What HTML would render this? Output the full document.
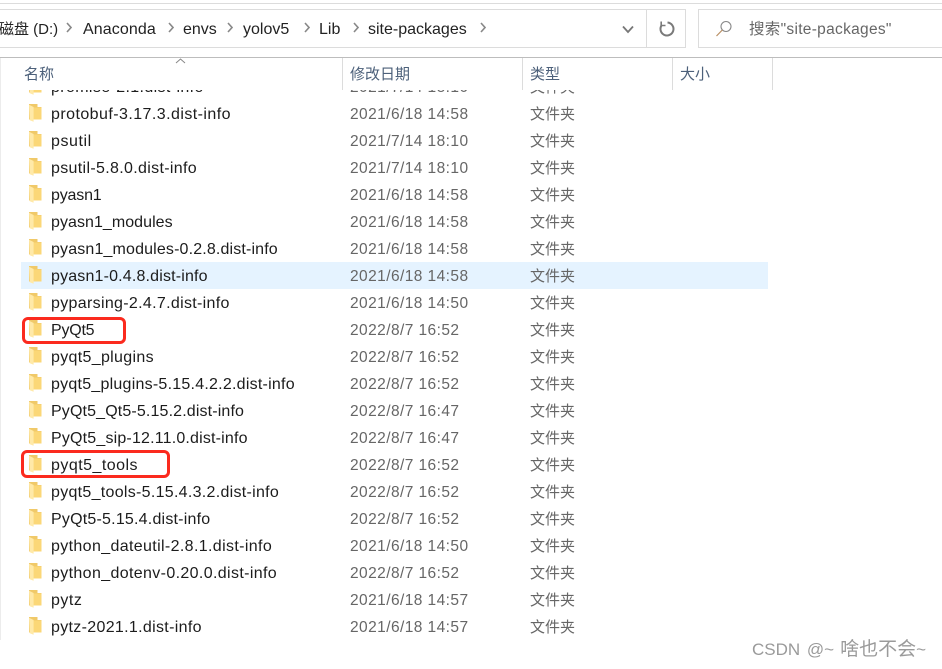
<!DOCTYPE html>
<html><head><meta charset="utf-8"><style>
html,body{margin:0;padding:0;background:#fff}
body{width:942px;height:669px;position:relative;overflow:hidden;font-family:"Liberation Sans","Noto Sans CJK SC",sans-serif;color:#1a1a1a}
.l{position:absolute;background:#dcdcdc}
.t{position:absolute;white-space:nowrap;line-height:20px;height:20px}
.b{font-size:16px;top:19px;color:#222}
.h{font-size:15px;top:65px;color:#4c607a}
.c{position:absolute;top:22px}
#list{position:absolute;left:0;top:90px;width:942px;height:550px;overflow:hidden}
.r{position:absolute;left:0;width:942px;height:27px;line-height:27px;font-size:16px;white-space:nowrap}
.r span{position:absolute;top:1px}
.r .n{left:51px;color:#1c1c1c}
.r .d{left:350px;color:#666;letter-spacing:.43px;font-size:15.5px}
.r .k{left:530px;color:#666;font-size:15px;top:1px}
.r svg{position:absolute;left:29px;top:4px}
.red{position:absolute;border:3.5px solid #fb2a1e;border-radius:6px;box-sizing:border-box}
</style></head><body>
<svg width="0" height="0" style="position:absolute"><defs>
<symbol id="f" viewBox="0 0 13 18"><path d="M0 0H8.5V3H12.5V15.5H0Z" fill="#f0c969"/><path d="M4 3.5H12.5V15.5H4Z" fill="#fbd777"/><path d="M0 .8L4.6 3V17.8L.8 16.2Z" fill="#ffe9a8"/></symbol></defs></svg>

<div class="l" style="left:0;top:3px;width:942px;height:1px"></div>
<div class="l" style="left:0;top:9px;width:685px;height:1px"></div>
<div class="l" style="left:0;top:47px;width:685px;height:1px"></div>
<div class="l" style="left:646px;top:9px;width:1px;height:39px"></div>
<div class="l" style="left:685px;top:9px;width:1px;height:39px"></div>
<div class="l" style="left:698px;top:9px;width:244px;height:1px"></div>
<div class="l" style="left:698px;top:47px;width:244px;height:1px"></div>
<div class="l" style="left:698px;top:9px;width:1px;height:39px"></div>
<div class="l" style="left:0;top:57px;width:942px;height:1px;background:#bdbdbd"></div>
<div class="l" style="left:0;top:58px;width:1px;height:582px;background:#ececec"></div>

<span class="t b" style="left:-1px;top:20px;font-size:15px">磁盘 (D:)</span>
<span class="t b" style="left:83px;top:20px;letter-spacing:.1px">Anaconda</span>
<span class="t b" style="left:183px;top:20px">envs</span>
<span class="t b" style="left:243px;top:20px">yolov5</span>
<span class="t b" style="left:319px;top:20px">Lib</span>
<span class="t b" style="left:368px;top:20px">site-packages</span>
<svg class="c" style="left:66px" width="6" height="12"><path d="M1 1L5 5.5L1 10" fill="none" stroke="#888" stroke-width="1.6"/></svg>
<svg class="c" style="left:168px" width="6" height="12"><path d="M1 1L5 5.5L1 10" fill="none" stroke="#888" stroke-width="1.6"/></svg>
<svg class="c" style="left:227px" width="6" height="12"><path d="M1 1L5 5.5L1 10" fill="none" stroke="#888" stroke-width="1.6"/></svg>
<svg class="c" style="left:304px" width="6" height="12"><path d="M1 1L5 5.5L1 10" fill="none" stroke="#888" stroke-width="1.6"/></svg>
<svg class="c" style="left:353px" width="6" height="12"><path d="M1 1L5 5.5L1 10" fill="none" stroke="#888" stroke-width="1.6"/></svg>
<svg class="c" style="left:480px" width="6" height="12"><path d="M1 1L5 5.5L1 10" fill="none" stroke="#888" stroke-width="1.6"/></svg>
<svg style="position:absolute;left:621px;top:25px" width="14" height="9"><path d="M2 1.5L7 7L12 1.5" fill="none" stroke="#777" stroke-width="1.8"/></svg>
<svg style="position:absolute;left:658px;top:20px" width="18" height="18"><path d="M9.5 2.5A6.5 6.5 0 1 1 4 4.8" fill="none" stroke="#7a7a7a" stroke-width="2"/><path d="M3.2 1.5V5.5H7.5" fill="none" stroke="#7a7a7a" stroke-width="1.6"/></svg>
<svg style="position:absolute;left:715px;top:20px" width="18" height="18"><circle cx="11" cy="6.5" r="5" fill="none" stroke="#888" stroke-width="1.1"/><path d="M7.3 10L1.5 16" stroke="#b98f63" stroke-width="1.2"/></svg>
<span class="t" style="left:749px;top:20px;font-size:15.5px;color:#666;letter-spacing:.3px">搜索"site-packages"</span>

<span class="t h" style="left:24px">名称</span>
<span class="t h" style="left:350px">修改日期</span>
<span class="t h" style="left:530px">类型</span>
<span class="t h" style="left:680px">大小</span>
<svg style="position:absolute;left:175px;top:58px" width="11" height="7"><path d="M1 5L5.5 1L10 5" fill="none" stroke="#888"/></svg>
<div class="l" style="left:342px;top:58px;width:1px;height:32px"></div>
<div class="l" style="left:522px;top:58px;width:1px;height:32px"></div>
<div class="l" style="left:672px;top:58px;width:1px;height:32px"></div>
<div class="l" style="left:772px;top:58px;width:1px;height:32px"></div>

<div id="list">
<div class="r" style="top:-17px"><svg width="13" height="18"><use href="#f"/></svg><span class="n" style="letter-spacing:.37px">promise-2.1.dist-info</span><span class="d">2021/7/14 18:10</span><span class="k">文件夹</span></div>
<div class="r" style="top:10px"><svg width="13" height="18"><use href="#f"/></svg><span class="n" style="letter-spacing:.44px">protobuf-3.17.3.dist-info</span><span class="d">2021/6/18 14:58</span><span class="k">文件夹</span></div>
<div class="r" style="top:37px"><svg width="13" height="18"><use href="#f"/></svg><span class="n" style="letter-spacing:.56px">psutil</span><span class="d">2021/7/14 18:10</span><span class="k">文件夹</span></div>
<div class="r" style="top:64px"><svg width="13" height="18"><use href="#f"/></svg><span class="n" style="letter-spacing:.33px">psutil-5.8.0.dist-info</span><span class="d">2021/7/14 18:10</span><span class="k">文件夹</span></div>
<div class="r" style="top:91px"><svg width="13" height="18"><use href="#f"/></svg><span class="n" style="letter-spacing:-.18px">pyasn1</span><span class="d">2021/6/18 14:58</span><span class="k">文件夹</span></div>
<div class="r" style="top:118px"><svg width="13" height="18"><use href="#f"/></svg><span class="n" style="letter-spacing:.05px">pyasn1_modules</span><span class="d">2021/6/18 14:58</span><span class="k">文件夹</span></div>
<div class="r" style="top:145px"><svg width="13" height="18"><use href="#f"/></svg><span class="n" style="letter-spacing:.15px">pyasn1_modules-0.2.8.dist-info</span><span class="d">2021/6/18 14:58</span><span class="k">文件夹</span></div>
<div style="position:absolute;left:21px;top:172px;width:747px;height:27px;background:#e5f3ff"></div>
<div class="r" style="top:172px"><svg width="13" height="18"><use href="#f"/></svg><span class="n" style="letter-spacing:.17px">pyasn1-0.4.8.dist-info</span><span class="d">2021/6/18 14:58</span><span class="k">文件夹</span></div>
<div class="r" style="top:199px"><svg width="13" height="18"><use href="#f"/></svg><span class="n" style="letter-spacing:.32px">pyparsing-2.4.7.dist-info</span><span class="d">2021/6/18 14:50</span><span class="k">文件夹</span></div>
<div class="r" style="top:226px"><svg width="13" height="18"><use href="#f"/></svg><span class="n" style="letter-spacing:-.22px">PyQt5</span><span class="d">2022/8/7 16:52</span><span class="k">文件夹</span></div>
<div class="r" style="top:253px"><svg width="13" height="18"><use href="#f"/></svg><span class="n" style="letter-spacing:.32px">pyqt5_plugins</span><span class="d">2022/8/7 16:52</span><span class="k">文件夹</span></div>
<div class="r" style="top:280px"><svg width="13" height="18"><use href="#f"/></svg><span class="n" style="letter-spacing:.24px">pyqt5_plugins-5.15.4.2.2.dist-info</span><span class="d">2022/8/7 16:52</span><span class="k">文件夹</span></div>
<div class="r" style="top:307px"><svg width="13" height="18"><use href="#f"/></svg><span class="n" style="letter-spacing:.14px">PyQt5_Qt5-5.15.2.dist-info</span><span class="d">2022/8/7 16:47</span><span class="k">文件夹</span></div>
<div class="r" style="top:334px"><svg width="13" height="18"><use href="#f"/></svg><span class="n" style="letter-spacing:.18px">PyQt5_sip-12.11.0.dist-info</span><span class="d">2022/8/7 16:47</span><span class="k">文件夹</span></div>
<div class="r" style="top:361px"><svg width="13" height="18"><use href="#f"/></svg><span class="n" style="letter-spacing:.47px">pyqt5_tools</span><span class="d">2022/8/7 16:52</span><span class="k">文件夹</span></div>
<div class="r" style="top:388px"><svg width="13" height="18"><use href="#f"/></svg><span class="n" style="letter-spacing:.29px">pyqt5_tools-5.15.4.3.2.dist-info</span><span class="d">2022/8/7 16:52</span><span class="k">文件夹</span></div>
<div class="r" style="top:415px"><svg width="13" height="18"><use href="#f"/></svg><span class="n" style="letter-spacing:.21px">PyQt5-5.15.4.dist-info</span><span class="d">2022/8/7 16:52</span><span class="k">文件夹</span></div>
<div class="r" style="top:442px"><svg width="13" height="18"><use href="#f"/></svg><span class="n" style="letter-spacing:.36px">python_dateutil-2.8.1.dist-info</span><span class="d">2021/6/18 14:50</span><span class="k">文件夹</span></div>
<div class="r" style="top:469px"><svg width="13" height="18"><use href="#f"/></svg><span class="n" style="letter-spacing:.36px">python_dotenv-0.20.0.dist-info</span><span class="d">2022/8/7 16:52</span><span class="k">文件夹</span></div>
<div class="r" style="top:496px"><svg width="13" height="18"><use href="#f"/></svg><span class="n" style="letter-spacing:.5px">pytz</span><span class="d">2021/6/18 14:57</span><span class="k">文件夹</span></div>
<div class="r" style="top:523px"><svg width="13" height="18"><use href="#f"/></svg><span class="n" style="letter-spacing:.32px">pytz-2021.1.dist-info</span><span class="d">2021/6/18 14:57</span><span class="k">文件夹</span></div>
</div>

<div class="red" style="left:22px;top:317px;width:104px;height:27px"></div>
<div class="red" style="left:21px;top:450px;width:149px;height:28px"></div>
<span class="t" style="left:752px;top:640px;font-size:17px;color:#9a9a9a;word-spacing:2px">CSDN @~<span style="font-size:19px;margin-left:6px">啥也不会</span>~</span>
</body></html>
